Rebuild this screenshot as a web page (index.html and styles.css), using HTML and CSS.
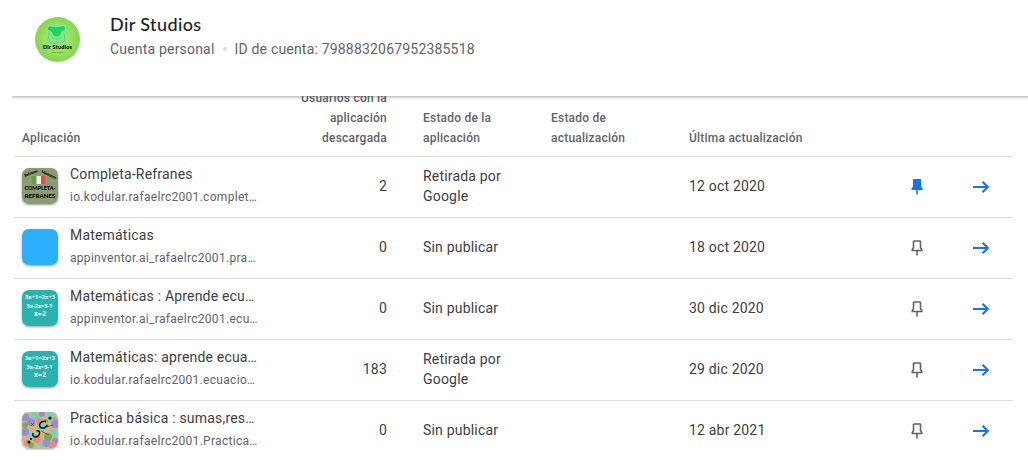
FILE: index.html
```html
<!DOCTYPE html>
<html lang="es">
<head>
<meta charset="utf-8">
<title>Dir Studios</title>
<link rel="stylesheet" href="styles.css">
</head>
<body>
<svg class="defs" aria-hidden="true">
  <symbol id="pin" viewBox="0 0 20 20"><path d="M7.300 4h5.700l.5.5v6.300l1.200 1.700v1H5.300v-1l1.200-1.700V4.500zM10 13.500v5" fill="none" stroke="currentColor" stroke-width="1.600"/></symbol>
  <symbol id="pin-filled" viewBox="0 0 20 20"><path d="M7 3h6.200q1 0 1 1v6.500l1.500 2V14h-4.900v4.500H9.200V14H4.500v-1.500l1.500-2V4q0-1 1-1z" fill="currentColor"/></symbol>
  <symbol id="arrow" viewBox="0 0 24 24"><path d="M4 12h15M13.500 6.700l5.300 5.300-5.300 5.300" fill="none" stroke="currentColor" stroke-width="2.100"/></symbol>
  <symbol id="equations" viewBox="0 0 36 36">
    <rect width="36" height="36" fill="#2bb1ae"/>
    <g fill="#fff" class="equation-text" text-anchor="middle">
      <text x="18" y="9" textLength="30">3x+1=2x+3</text>
      <text x="17.500" y="17.500" textLength="26">3x-2x=3-1</text>
      <text x="18" y="26" textLength="12" class="equation-result">x=2</text>
    </g>
  </symbol>
</svg>

<header class="account">
  <svg class="avatar" viewBox="0 0 45 45">
    <defs><radialGradient id="lime"><stop offset=".4" stop-color="#a0e66c"/><stop offset="1" stop-color="#86d552"/></radialGradient></defs>
    <circle cx="22.500" cy="22.500" r="22.500" fill="url(#lime)"/>
    <rect x="12" y="8" width="19" height="19" fill="#82e989"/>
    <path d="M14 9.500q4 1.500 7.500 1t7.500-1l.5 3-3.500 2-2 4q-2.500 1-5 0l-2-4-3.500-2z" fill="#16d767" stroke="#239a50" stroke-width=".4"/>
    <path d="M14 16l-1 7 3 3h11l3-3-1-7M17 20l2 2h6l2-2" fill="none" stroke="#49b969" stroke-width=".5"/>
    <text x="22.500" y="31.500" text-anchor="middle" textLength="29" class="avatar-name">Dir Studios</text>
    <text x="22.500" y="35.500" text-anchor="middle" textLength="12" class="avatar-tag">app maker</text>
  </svg>
  <div class="account-text">
    <h1 class="account-name">Dir Studios</h1>
    <div class="account-meta"><span>Cuenta personal</span><i class="dot"></i><span>ID de cuenta: 7988832067952385518</span></div>
  </div>
</header>

<main class="table">
  <div class="row head">
    <div>Aplicación</div>
    <div class="num">Usuarios con la aplicación descargada</div>
    <div class="status">Estado de la aplicación</div>
    <div class="update">Estado de actualización</div>
    <div>Última actualización</div>
  </div>

  <div class="row">
    <div class="app">
      <svg class="icon" viewBox="0 0 36 36">
        <rect width="36" height="36" fill="#8b9b74"/>
        <path d="M10 8h4.500v8H10z" fill="#55a544"/><path d="M14.500 8h4.500v8h-4.500z" fill="#f4f2e8"/><path d="M19 8h4v8h-4z" fill="#ee493c"/>
        <g class="sign-text">
          <text x="3" y="9" textLength="14" transform="rotate(-22 3 9)" class="sign-small">Refranes</text>
          <text x="19" y="4.500" textLength="16" transform="rotate(25 19 4.500)" class="sign-small">Mexicanos</text>
          <text x="2.500" y="22.300" textLength="31" lengthAdjust="spacingAndGlyphs">COMPLETA-</text>
          <text x="2.500" y="30.300" textLength="31" lengthAdjust="spacingAndGlyphs">REFRANES</text>
        </g>
      </svg>
      <div class="app-text"><div class="app-name">Completa-Refranes</div><div class="app-id">io.kodular.rafaelrc2001.complet…</div></div>
    </div>
    <div class="num">2</div><div class="status">Retirada por Google</div><div class="update"></div><div>12 oct 2020</div>
    <svg class="pin pinned"><use href="#pin-filled"/></svg><svg class="arrow"><use href="#arrow"/></svg>
  </div>

  <div class="row">
    <div class="app">
      <svg class="icon" viewBox="0 0 36 36"><rect width="36" height="36" fill="#2eaeff"/></svg>
      <div class="app-text"><div class="app-name">Matemáticas</div><div class="app-id">appinventor.ai_rafaelrc2001.pra…</div></div>
    </div>
    <div class="num">0</div><div class="status">Sin publicar</div><div class="update"></div><div>18 oct 2020</div>
    <svg class="pin"><use href="#pin"/></svg><svg class="arrow"><use href="#arrow"/></svg>
  </div>

  <div class="row">
    <div class="app">
      <svg class="icon"><use href="#equations"/></svg>
      <div class="app-text"><div class="app-name">Matemáticas : Aprende ecu…</div><div class="app-id">appinventor.ai_rafaelrc2001.ecu…</div></div>
    </div>
    <div class="num">0</div><div class="status">Sin publicar</div><div class="update"></div><div>30 dic 2020</div>
    <svg class="pin"><use href="#pin"/></svg><svg class="arrow"><use href="#arrow"/></svg>
  </div>

  <div class="row">
    <div class="app">
      <svg class="icon"><use href="#equations"/></svg>
      <div class="app-text"><div class="app-name">Matemáticas: aprende ecua…</div><div class="app-id">io.kodular.rafaelrc2001.ecuacio…</div></div>
    </div>
    <div class="num">183</div><div class="status">Retirada por Google</div><div class="update"></div><div>29 dic 2020</div>
    <svg class="pin"><use href="#pin"/></svg><svg class="arrow"><use href="#arrow"/></svg>
  </div>

  <div class="row">
    <div class="app">
      <svg class="icon" viewBox="0 0 36 36">
        <rect width="36" height="36" fill="#d9b483"/>
        <g fill="#9b8bd0"><circle cx="3" cy="5" r="4"/><circle cx="9" cy="10" r="4"/><circle cx="33" cy="12" r="4"/><circle cx="3" cy="20" r="4"/><circle cx="24" cy="31" r="4"/><circle cx="20" cy="2" r="3"/><circle cx="33" cy="29" r="3"/></g>
        <g fill="#7fcdbd"><circle cx="13" cy="4" r="4"/><circle cx="29" cy="4" r="5"/><circle cx="20" cy="14" r="5"/><circle cx="31" cy="21" r="4"/><circle cx="10" cy="24" r="4"/><circle cx="18" cy="31" r="3"/></g>
        <g fill="#e58b76"><circle cx="17" cy="9" r="3"/><circle cx="15" cy="27" r="4"/><circle cx="31" cy="34" r="4"/><circle cx="33" cy="7" r="2"/><circle cx="5" cy="31" r="3"/></g>
        <g fill="#78af55"><circle cx="3" cy="13" r="3"/><circle cx="26" cy="25" r="4"/><circle cx="9" cy="33" r="3"/><circle cx="24" cy="9" r="2"/></g>
        <path d="M24 9.500q-5-1-6.500 3.500 0 3 3 3 3 0 5-3M11 21q-1 4 3 4 4-1 3.500-5-1-2-3-1" fill="none" stroke="#141414" stroke-width="1.500"/>
        <path d="M9 11l3 3m0-3l-3 3M24 15l7-2M19 19l8 4" stroke="#333" stroke-width=".6"/>
        <circle cx="28" cy="6" r="1.500"/><circle cx="7" cy="30" r="1.500"/><circle cx="9" cy="27" r="1"/>
      </svg>
      <div class="app-text"><div class="app-name">Practica básica : sumas,res…</div><div class="app-id">io.kodular.rafaelrc2001.Practica…</div></div>
    </div>
    <div class="num">0</div><div class="status">Sin publicar</div><div class="update"></div><div>12 abr 2021</div>
    <svg class="pin"><use href="#pin"/></svg><svg class="arrow"><use href="#arrow"/></svg>
  </div>
</main>
</body>
</html>
```
FILE: styles.css
```css
* { box-sizing: border-box; }
body {
  margin: 0;
  height: 460px;
  overflow: hidden;
  background: #fff;
  color: #3c4043;
  font: 14px/20px Roboto, sans-serif;
  letter-spacing: .19px;
}
.defs { display: none; }

.account {
  position: relative;
  z-index: 1;
  display: flex;
  gap: 30px;
  height: 96px;
  margin: 0 -12px 0 12px;
  padding: 12px 0 0 23px;
  background: #fff;
  box-shadow: 0 1px 2px rgba(60, 64, 67, .25), 0 2px 4px rgba(60, 64, 67, .18);
  clip-path: inset(0 0 -8px 0);
}
.avatar { width: 45px; height: 45px; margin-top: 5px; }
.avatar-name { font: 900 5.500px Lato, sans-serif; letter-spacing: 0; }
.avatar-tag { font: 2.500px Lato, sans-serif; letter-spacing: 0; fill: #3d6d28; }
.account-name {
  margin: 0;
  color: #202124;
  font: 500 18px/24px Lato, sans-serif;
  letter-spacing: .4px;
}
.account-meta { display: flex; align-items: center; margin-top: 3px; color: #5f6368; }
.dot { width: 4px; height: 4px; margin: 0 8px; border-radius: 50%; background: #dadce0; }

.table { margin: 0 15px 0 14px; }
.row {
  display: grid;
  grid-template-columns: 256px 109px 36px 128px 138px 218px 62px 1fr;
  grid-template-areas: "app num . status update date pin arrow";
  grid-template-rows: 100%;
  align-items: center;
  height: 61px;
  padding: 0 0 2px 8px;
  border-bottom: 1px solid #dadce0;
}
.row:last-child { border-color: transparent; }
.row > .status { grid-column: status; padding-right: 30px; }
.row > .update { grid-column: update; padding-right: 30px; }
.num { text-align: right; }
.head {
  align-items: end;
  padding-bottom: 8px;
  color: #5f6368;
  font-size: 12px;
  font-weight: 500;
  letter-spacing: .22px;
}
.head .num { padding-left: 12px; }

.app { display: flex; align-items: center; gap: 12px; }
.icon {
  flex: none;
  width: 36px;
  height: 36px;
  border-radius: 7px;
  box-shadow: 0 1px 2px rgba(60, 64, 67, .35), 0 1px 3px rgba(60, 64, 67, .2);
}
.app-text { padding-top: 1px; white-space: nowrap; }
.app-name { margin-top: -2px; }
.app-id { margin-top: 3px; color: #5f6368; font-size: 12px; letter-spacing: .3px; }
.equation-text { font: 700 5.500px "Open Sans", sans-serif; letter-spacing: 0; }
.equation-result { font-size: 6.500px; }
.sign-text { font: 900 6px Lato, sans-serif; letter-spacing: 0; }
.sign-small { font-size: 4px; }

.pin { width: 20px; height: 20px; color: #5f6368; }
.pinned { color: #1a73e8; }
.arrow { width: 24px; height: 24px; margin-top: 2px; color: #1a73e8; }
```
